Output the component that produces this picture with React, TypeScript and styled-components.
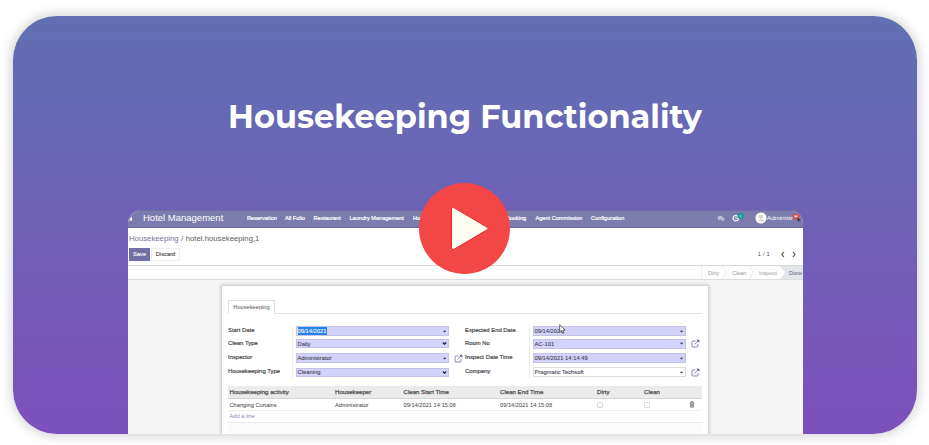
import React from "react";
import styled, { createGlobalStyle } from "styled-components";

const GlobalStyle = createGlobalStyle`
  * { box-sizing: border-box; }
  body { margin: 0; background: #fff; overflow: hidden; }
`;

const Page = styled.main`
  width: 929px;
  height: 445px;
  padding: 16px 12px 11px 13px;
  font-family: "Liberation Sans", Arial, sans-serif;
  overflow: hidden;
`;

const Card = styled.section`
  position: relative;
  display: flex;
  flex-direction: column;
  align-items: center;
  width: 904px;
  height: 418px;
  border-radius: 44px;
  background: linear-gradient(#6070b1, #6f60b7 50%, #7c50bb);
  box-shadow: 0 0 14px rgba(0, 0, 0, 0.24);
`;

const Title = styled.h1`
  height: 194px;
  margin: 0;
  padding: 81px 0 0;
  color: #fff;
  font: 700 32px/40px Montserrat, Inter, sans-serif;
  letter-spacing: 0.02px;
  white-space: nowrap;
`;

const Screen = styled.div`
  display: flex;
  flex-direction: column;
  width: 675px;
  height: 224px;
  margin-left: 1px;
  overflow: hidden;
  border-radius: 14px 14px 0 0;
  background: #fff;
  color: #505050;
  font-size: 5.8px;
  line-height: 8px;
  white-space: nowrap;
`;

const Nav = styled.nav`
  display: grid;
  grid-template-columns: 15px 104px 38px 28.5px 36px 63.5px 93px 29.5px 55.5px 126px 15px 23px 48px;
  align-items: center;
  flex: none;
  height: 18px;
  padding-bottom: 2px;
  border-top: 1px solid #6e6f9f;
  border-bottom: 1px solid #6b6a9f;
  background: #7c7bad;
  color: #fff;
`;

const Brand = styled.span`
  font-size: 9.5px;
`;

const NavItem = styled.span`
  font-size: 5.6px;
  -webkit-text-stroke: 0.2px #fff;
`;

const Account = styled.div`
  display: flex;
  align-items: center;
  font-size: 6.2px;
`;

const Control = styled.header`
  display: grid;
  grid-template-rows: 18.5px 13px;
  flex: none;
  height: 38px;
  padding: 1px 6px 0 1px;
  border-bottom: 1px solid #d8d8d8;
`;

const Crumbs = styled.div`
  display: flex;
  gap: 2.5px;
  font-size: 7.75px;
  line-height: 19px;
  color: #606060;
`;

const CrumbLink = styled.span`
  color: #7672a2;
`;

const Actions = styled.div`
  display: flex;
  align-items: center;
  gap: 1px;
`;

const Button = styled.button<{ $primary?: boolean }>`
  width: ${(p) => (p.$primary ? 21 : 29)}px;
  height: 13px;
  padding: 0;
  border: 1px solid ${(p) => (p.$primary ? "#7170a5" : "#ededed")};
  background: ${(p) => (p.$primary ? "#7170a5" : "#fff")};
  color: ${(p) => (p.$primary ? "#fff" : "#444")};
  font: 5.8px/11px "Liberation Sans", Arial, sans-serif;
  -webkit-text-stroke: 0.1px currentColor;
`;

const Pager = styled.div`
  display: flex;
  align-items: center;
  gap: 9px;
  margin-left: auto;
  letter-spacing: 0.2px;
`;

const Status = styled.div`
  display: flex;
  justify-content: flex-end;
  flex: none;
  height: 14px;
  border-bottom: 1px solid #dcdcdc;
`;

const Stage = styled.div<{ $width: number; $active?: boolean }>`
  display: flex;
  align-items: center;
  justify-content: space-between;
  width: ${(p) => p.$width}px;
  padding-left: ${(p) => (p.$active ? 9 : 5)}px;
  color: ${(p) => (p.$active ? "#60607c" : "#999")};
  background: ${(p) => (p.$active ? "#e2e5ea" : "#fff")};
  clip-path: ${(p) => (p.$active ? "polygon(0 0, 100% 0, 100% 100%, 0 100%, 5px 50%)" : "none")};
  font-size: 5.5px;

  &:first-child {
    padding-left: 6px;
    border-left: 1px solid #eee;
  }
`;

const Body = styled.div`
  flex: 1;
  min-height: 0;
  padding: 5px 94px 0 93px;
  background: #f5f5f6;
`;

const Sheet = styled.div`
  height: 149px;
  padding: 14px 6px 0;
  border: 1px solid #d4d4d4;
  border-bottom: 0;
  background: #fff;
  box-shadow: 0 0 4px rgba(0, 0, 0, 0.2);
`;

const Tabs = styled.div`
  height: 14px;
  border-bottom: 1px solid #e2e2e2;
`;

const Tab = styled.div`
  width: 47px;
  height: 14px;
  border: 1px solid #dedede;
  border-bottom-color: #fff;
  background: #fff;
  text-align: center;
  font-size: 5.7px;
  line-height: 13px;
`;

const Form = styled.div`
  display: grid;
  grid-template-columns: 237px 1fr;
  height: 72px;
  padding-top: 11px;
`;

const Group = styled.div`
  display: grid;
  grid-template-rows: 12px 13px 16px 12px;
`;

const FieldRow = styled.div`
  display: grid;
  grid-template-columns: 64px 4px 153px 1fr;
  align-items: center;
`;

const Label = styled.label`
  align-self: center;
  padding-bottom: 2px;
  color: #444;
  -webkit-text-stroke: 0.18px #444;
  font-size: 5.9px;
`;

const Rule = styled.span`
  align-self: stretch;
  border-left: 1px solid #eee;
`;

const Input = styled.div<{ $plain?: boolean; $short?: boolean }>`
  display: flex;
  align-items: center;
  justify-content: space-between;
  height: ${(p) => (p.$short ? 9 : 10)}px;
  padding: 0 1px 0 0.5px;
  border: 1px solid ${(p) => (p.$plain ? "#ddd" : "#c4c3e5")};
  background: ${(p) => (p.$plain ? "#fff" : "#d3d2fb")};
  color: #3c3c50;
  font-size: 5.8px;
  -webkit-text-stroke: 0.08px currentColor;
`;

const Value = styled.span<{ $selected?: boolean }>`
  line-height: 8px;
  background: ${(p) => (p.$selected ? "#2583e9" : "transparent")};
  color: ${(p) => (p.$selected ? "#fff" : "inherit")};
`;

const LinkIcon = styled.svg`
  margin-left: 5px;
  width: 9px;
  height: 9px;
`;

const TableRow = styled.div<{ $kind?: "head" }>`
  display: grid;
  grid-template-columns: 105.5px 68.5px 96.5px 97px 47px 45px 1fr;
  align-items: center;
  width: 474px;
  height: ${(p) => (p.$kind ? 13 : 12)}px;
  padding-left: 1.5px;
  background: ${(p) => (p.$kind ? "#ebebeb" : "#fff")};
  border-bottom: 1px solid ${(p) => (p.$kind ? "#d5d5d5" : "#ececec")};
  font-size: ${(p) => (p.$kind ? 6.1 : 5.7)}px;
  -webkit-text-stroke: ${(p) => (p.$kind ? "0.25px #505050" : "0.05px #505050")};
`;

const AddLine = styled.div`
  width: 474px;
  height: 12px;
  padding-left: 1.5px;
  border-bottom: 1px solid #e8e8e8;
  color: #8583b0;
  line-height: 11px;
  font-size: 5.7px;
`;

const TableFoot = styled.div`
  height: 12px;
  width: 474px;
  background: #fbfbfb;
`;

const Box = styled.span`
  width: 6px;
  height: 6px;
  border: 1px solid #d4d4d4;
  border-radius: 1.5px;
`;

const Play = styled.button`
  position: absolute;
  left: 406px;
  top: 167px;
  width: 91px;
  height: 91px;
  padding: 0;
  border: 0;
  background: none;
`;

const Pointer = styled.svg`
  position: absolute;
  left: 546px;
  top: 308px;
  width: 7px;
  height: 11px;
`;

const Caret = ({ chevron }: { chevron?: boolean }) => (
  <svg width="5" height="5" viewBox="0 0 5 5">
    {chevron ? (
      <path d="M.8 1.5 2.5 3.2 4.2 1.5" fill="none" stroke="#222" strokeWidth="1.1" />
    ) : (
      <path d="M.9 1.8h3.4L2.6 3.6z" fill="#333" />
    )}
  </svg>
);

const OpenRecord = () => (
  <LinkIcon viewBox="0 0 9 9" fill="none" stroke="#7d7ba6" strokeWidth=".9">
    <path d="M4.5 2H2a1 1 0 0 0-1 1v4a1 1 0 0 0 1 1h4a1 1 0 0 0 1-1V5.2M3.6 5.4 8 1" />
    <path d="M5.4.8h2.9v2.9z" fill="#56547f" stroke="none" />
  </LinkIcon>
);

const Separator = () => (
  <svg width="5" height="13" viewBox="0 0 5 13">
    <path d="M.5 0 4.5 6.5.5 13" fill="none" stroke="#e2e2e2" strokeWidth=".8" />
  </svg>
);

interface FieldData {
  label: string;
  value: string;
  selected?: boolean;
  chevron?: boolean;
  plain?: boolean;
  link?: boolean;
}

const leftFields: FieldData[] = [
  { label: "Start Date", value: "09/14/2021", selected: true },
  { label: "Clean Type", value: "Daily", chevron: true },
  { label: "Inspector", value: "Administrator", link: true },
  { label: "Housekeeping Type", value: "Cleaning", chevron: true },
];

const rightFields: FieldData[] = [
  { label: "Expected End Date", value: "09/14/2021" },
  { label: "Room No", value: "AC-101", link: true },
  { label: "Inspect Date Time", value: "09/14/2021 14:14:49" },
  { label: "Company", value: "Pragmatic Techsoft", plain: true, link: true },
];

const Fields = ({ items }: { items: FieldData[] }) => (
  <Group>
    {items.map((f) => (
      <FieldRow key={f.label}>
        <Label>{f.label}</Label>
        <Rule />
        <Input $plain={f.plain} $short={f.chevron}>
          <Value $selected={f.selected}>{f.value}</Value>
          <Caret chevron={f.chevron} />
        </Input>
        {f.link && <OpenRecord />}
      </FieldRow>
    ))}
  </Group>
);

export default function App() {
  return (
    <Page>
      <GlobalStyle />
      <Card>
        <Title>Housekeeping Functionality</Title>
        <Screen>
          <Nav>
            <svg width="5" height="6" viewBox="0 0 5 6">
              <path d="M1 5.5h3V1.5L2.6 3z" fill="#fff" />
            </svg>
            <Brand>Hotel Management</Brand>
            <NavItem>Reservation</NavItem>
            <NavItem>All Folio</NavItem>
            <NavItem>Restaurant</NavItem>
            <NavItem>Laundry Management</NavItem>
            <NavItem>Housekeeping</NavItem>
            <NavItem>Booking</NavItem>
            <NavItem>Agent Commission</NavItem>
            <NavItem>Configuration</NavItem>
            <svg width="8" height="7" viewBox="0 0 8 7" fill="#c0c0dc">
              <ellipse cx="3.2" cy="2.8" rx="2.7" ry="2" />
              <path d="M1.5 4 1 5.8 3 4.6zM6 2.2c2 1 1.9 2.6.7 3.2l.5 1.1-1.8-.9c-1 .1-1.7-.2-2-.7 2 0 3-1.2 2.6-2.6z" />
            </svg>
            <svg width="14" height="12" viewBox="0 0 14 12">
              <circle cx="3.8" cy="6.2" r="2.7" fill="none" stroke="#fff" strokeWidth="1.2" />
              <path d="M3.8 4.6v1.9h1.6" fill="none" stroke="#fff" strokeWidth=".8" />
              <circle cx="8.7" cy="4" r="3.1" fill="#159a9c" />
              <path d="M8.7 2.6v2.8" stroke="#d7f2f2" strokeWidth=".7" />
            </svg>
            <Account>
              <svg width="12" height="12" viewBox="0 0 12 12">
                <circle cx="6" cy="6" r="5.6" fill="#fff" />
                <circle cx="6" cy="4.7" r="2.2" fill="#d5d5d5" />
                <path d="M3.2 9.5c0-3 5.6-3 5.6 0" fill="#d5d5d5" />
              </svg>
              Administr
              <svg width="9" height="11" viewBox="0 0 9 11">
                <rect x="0" y="1" width="6.5" height="5.4" rx="1" fill="#d85240" />
                <path d="M1.4 2.4h3.2v1.8H1.4z" fill="#f3dbd5" />
                <path d="m4 4.5 4 3-2 .2-.8 1.3z" fill="#382c34" />
              </svg>
            </Account>
          </Nav>
          <Control>
            <Crumbs>
              <CrumbLink>Housekeeping</CrumbLink>
              <span>/</span>
              <span>hotel.housekeeping,1</span>
            </Crumbs>
            <Actions>
              <Button $primary>Save</Button>
              <Button>Discard</Button>
              <Pager>
                1 / 1
                <svg width="18" height="7" viewBox="0 0 18 7" fill="none" stroke="#444" strokeWidth="1.1">
                  <path d="M5 1 2.8 3.5 5 6M13.8 1 16 3.5 13.8 6" />
                </svg>
              </Pager>
            </Actions>
          </Control>
          <Status>
            <Stage $width={26}>Dirty<Separator /></Stage>
            <Stage $width={27}>Clean<Separator /></Stage>
            <Stage $width={26}>Inspect</Stage>
            <Stage $width={23} $active>Done</Stage>
          </Status>
          <Body>
            <Sheet>
              <Tabs><Tab>Housekeeping</Tab></Tabs>
              <Form>
                <Fields items={leftFields} />
                <Fields items={rightFields} />
              </Form>
              <TableRow $kind="head">
                <span>Housekeeping activity</span>
                <span>Housekeeper</span>
                <span>Clean Start Time</span>
                <span>Clean End Time</span>
                <span>Dirty</span>
                <span>Clean</span>
              </TableRow>
              <TableRow>
                <span>Changing Curtains</span>
                <span>Administrator</span>
                <span>09/14/2021 14:15:08</span>
                <span>09/14/2021 14:15:08</span>
                <Box />
                <Box />
                <svg width="6" height="7" viewBox="0 0 6 7" fill="none" stroke="#666" strokeWidth=".7">
                  <path d="M.8 1.7h4.4M2 1.5V.7h2v.8M1.4 2v4.2h3.2V2M2.5 2.5v3M3.6 2.5v3" />
                </svg>
              </TableRow>
              <AddLine>Add a line</AddLine>
              <TableFoot />
            </Sheet>
          </Body>
        </Screen>
        <Pointer viewBox="0 0 7 11">
          <path d="M.7.7v7.2l1.8-1.5 1.2 3 1.3-.6-1.2-2.7h2.4z" fill="#fff" stroke="#444" strokeWidth=".8" />
        </Pointer>
        <Play aria-label="Play video">
          <svg width="91" height="91" viewBox="0 0 91 91">
            <circle cx="45.5" cy="45.5" r="45.5" fill="#f34747" />
            <path
              d="M32.5 27v37q0 3.6 3.2 1.9L67.8 47q2.3-1.4 0-2.9L35.7 25.1q-3.2-1.7-3.2 1.9z"
              fill="#fffcf0"
              stroke="#e92632"
              strokeWidth="1"
            />
          </svg>
        </Play>
      </Card>
    </Page>
  );
}
